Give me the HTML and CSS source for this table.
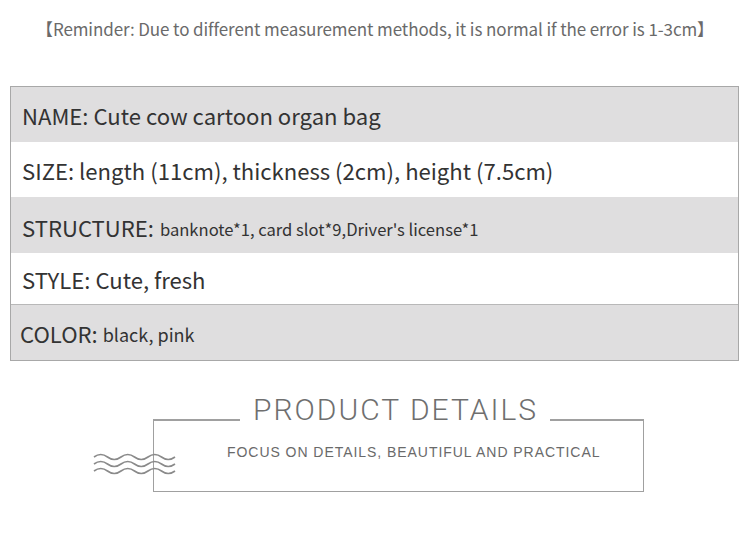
FILE: index.html
```html
<!DOCTYPE html>
<html>
<head>
<meta charset="utf-8">
<link rel="stylesheet" href="styles.css">
</head>
<body>
<div class="page">
  <p class="reminder">【Reminder: Due to different measurement methods, it is normal if the error is 1-3cm】</p>
  <div class="spec">
    <div class="row gray"><span class="label">NAME: Cute cow cartoon organ bag</span></div>
    <div class="row white"><span class="label">SIZE: length (11cm), thickness (2cm), height (7.5cm)</span></div>
    <div class="row gray r3"><span class="label">STRUCTURE: </span><span class="value">banknote*1, card slot*9,Driver's license*1</span></div>
    <div class="row white r4"><span class="label">STYLE: Cute, fresh</span></div>
    <div class="row gray r5"><span class="label">COLOR: </span><span class="value v2">black, pink</span></div>
  </div>
  <div class="details">
    <div class="frame">
      <div class="head">
        <span class="line left"></span>
        <h2 class="title">PRODUCT DETAILS</h2>
        <span class="line right"></span>
      </div>
      <p class="subtitle">FOCUS ON DETAILS, BEAUTIFUL AND PRACTICAL</p>
      <svg class="waves" width="84" height="22" viewBox="0 0 84 22">
        <g fill="none" stroke="#8a8a8a" stroke-width="1.6">
          <path d="M1 4 Q7.75 -1 14.5 4 T28 4 T41.5 4 T55 4 T68.5 4 T82 4"/>
          <path d="M1 11 Q7.75 6 14.5 11 T28 11 T41.5 11 T55 11 T68.5 11 T82 11"/>
          <path d="M1 18 Q7.75 13 14.5 18 T28 18 T41.5 18 T55 18 T68.5 18 T82 18"/>
        </g>
      </svg>
    </div>
  </div>
</div>
</body>
</html>
```
FILE: styles.css
```css
html, body {
  margin: 0;
  padding: 0;
  background: #fff;
}
.page {
  width: 750px;
  height: 534px;
  overflow: hidden;
  font-family: "Noto Sans CJK SC", "Noto Sans", sans-serif;
}
.reminder {
  margin: 0;
  height: 86px;
  padding-top: 16px;
  box-sizing: border-box;
  text-align: center;
  font-size: 17px;
  line-height: 26px;
  color: #6a6a6a;
  letter-spacing: -0.1px;
  white-space: nowrap;
}
.spec {
  margin-left: 10px;
  width: 729px;
  border: 1px solid #a8a8a8;
  box-sizing: border-box;
}
.row {
  height: 55px;
  display: flex;
  align-items: center;
  padding-left: 11px;
  color: #333;
  white-space: nowrap;
}
.gray { background: #dfdedf; }
.white { background: #fff; }
.r3 { height: 56px; padding-top: 4px; box-sizing: border-box; }
.r4 { height: 51px; border-bottom: 1px solid #b8b8b8; }
.r5 { height: 55px; padding-left: 9px; }
.label {
  font-size: 22.1px;
}
.value {
  font-size: 16.6px;
  margin-left: 6px;
  padding-top: 3px;
}
.v2 {
  font-size: 18px;
  margin-left: 5px;
}
.details {
  padding-top: 58px;
}
.frame {
  position: relative;
  margin-left: 153px;
  width: 491px;
  height: 73px;
  box-sizing: border-box;
  border: 1.5px solid #a0a0a0;
  border-top: none;
}
.head {
  display: flex;
  align-items: flex-start;
}
.line {
  height: 1.5px;
  background: #a0a0a0;
}
.left { width: 86px; }
.right { flex: 1; }
.title {
  margin: -25px 0 0;
  padding: 0 12px 0 13px;
  font-family: Roboto, "Liberation Sans", sans-serif;
  font-weight: 300;
  font-size: 30px;
  line-height: 32px;
  letter-spacing: 2px;
  color: #6f6f6f;
}
.subtitle {
  margin: 17px 0 0 73px;
  font-family: "Liberation Sans", Arial, sans-serif;
  font-size: 14px;
  line-height: 18px;
  letter-spacing: 0.95px;
  color: #6a6a6a;
  white-space: nowrap;
}
.waves {
  position: absolute;
  left: -61px;
  top: 34px;
}
```
